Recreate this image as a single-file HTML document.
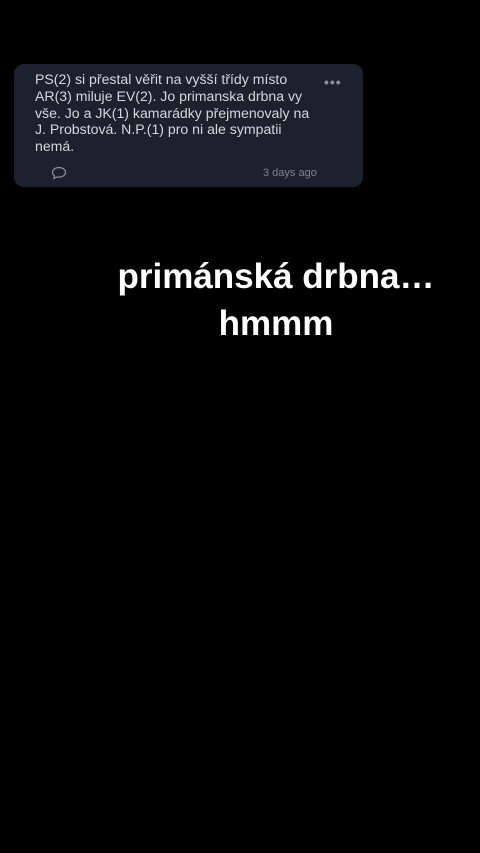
<!DOCTYPE html>
<html><head><meta charset="utf-8"><style>
html,body{margin:0;padding:0;background:#000;width:480px;height:853px;overflow:hidden;font-family:"Liberation Sans",sans-serif;}
.card{position:absolute;left:14px;top:64px;width:349px;height:123px;background:#1b222e;border-radius:10px;}
.txt{position:absolute;left:21px;top:7px;width:300px;color:#d3d6dc;font-size:14.1px;line-height:16.8px;white-space:nowrap;}
.dots{position:absolute;left:310px;top:10px;color:#8a919c;font-size:14px;letter-spacing:1px;font-weight:bold;}
.ago{position:absolute;left:249px;top:103px;color:#7b8390;font-size:11px;}
.big{position:absolute;left:60px;width:432px;text-align:center;color:#fff;font-weight:bold;font-size:35px;}
</style></head><body>
<div class="card">
<div class="txt">PS(2) si přestal věřit na vyšší třídy místo<br>AR(3) miluje EV(2). Jo primanska drbna vy<br>vše. Jo a JK(1) kamarádky přejmenovaly na<br>J. Probstová. N.P.(1) pro ni ale sympatii<br>nemá.</div>
<div class="dots">•••</div>
<svg style="position:absolute;left:37px;top:102px" width="16" height="14" viewBox="0 0 16 14"><path d="M8 1.5C4.4 1.5 1.5 3.6 1.5 6.3c0 1.4.8 2.6 2 3.5L3 12.5l3-1.6c.6.2 1.3.2 2 .2 3.6 0 6.5-2.1 6.5-4.8S11.6 1.5 8 1.5z" fill="none" stroke="#8a919c" stroke-width="1.2"/></svg>
<div class="ago">3 days ago</div>
</div>
<div class="big" style="top:257px">primánská drbna…</div>
<div class="big" style="top:304px">hmmm</div>
</body></html>
